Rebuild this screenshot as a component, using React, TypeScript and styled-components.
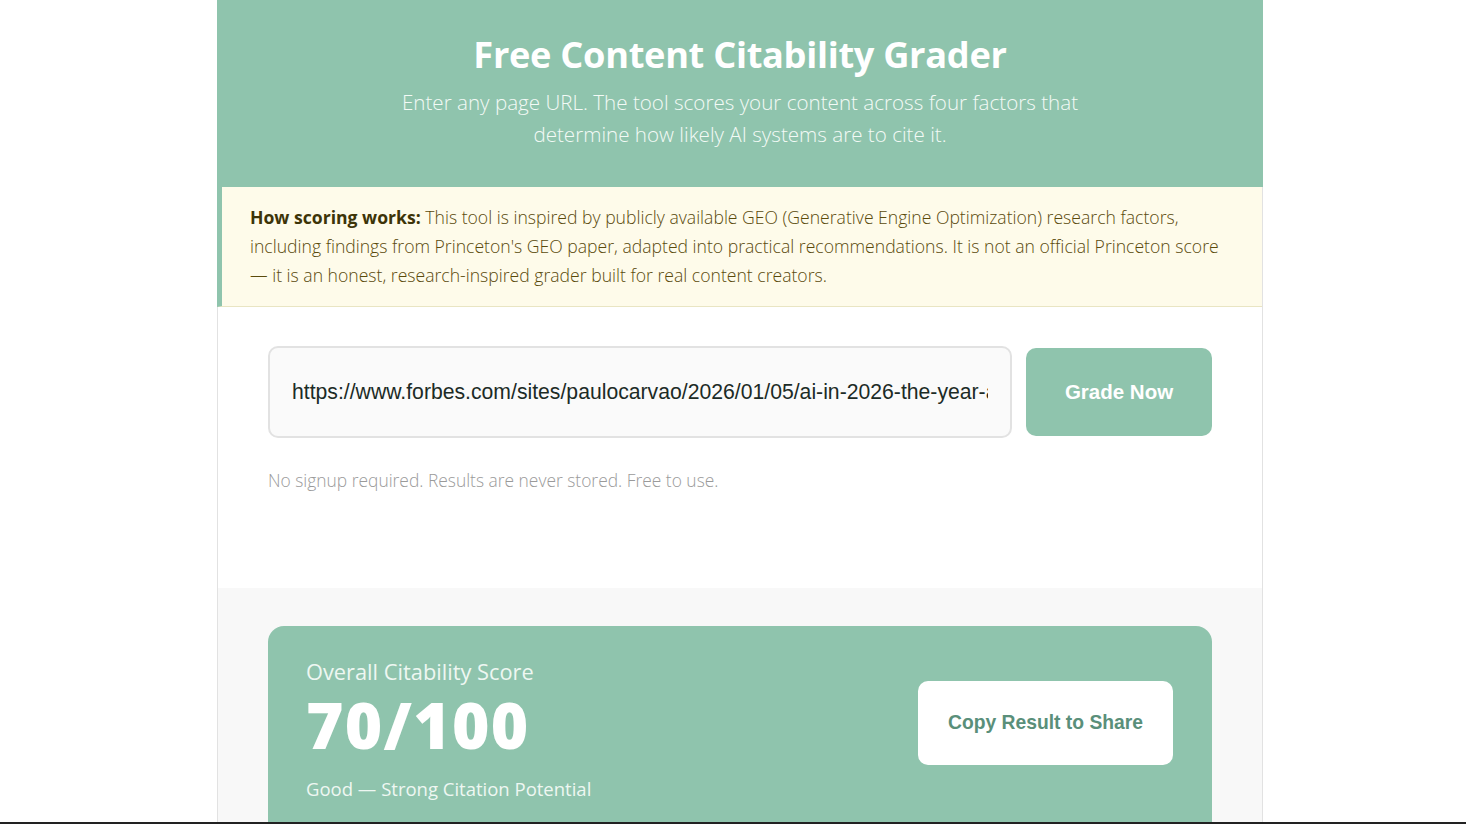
import styled, { createGlobalStyle } from "styled-components";

const GlobalStyle = createGlobalStyle`
  html, body {
    margin: 0;
    padding: 0;
    background: #ffffff;
  }
  body {
    font-family: "Open Sans", "Noto Sans", sans-serif;
  }
  * {
    box-sizing: border-box;
  }
`;

const green = "#8fc4ad";

const App = () => {
  const url =
    "https://www.forbes.com/sites/paulocarvao/2026/01/05/ai-in-2026-the-year-ai-gets-real/";

  return (
    <>
      <GlobalStyle />
      <Page>
        <Header>
          <Title>Free Content Citability Grader</Title>
          <Subtitle>
            Enter any page URL. The tool scores your content across four factors that
            determine how likely AI systems are to cite it.
          </Subtitle>
        </Header>
        <Notice>
          <strong>How scoring works:</strong> This tool is inspired by publicly available
          GEO (Generative Engine Optimization) research factors, including findings from
          Princeton's GEO paper, adapted into practical recommendations. It is not an
          official Princeton score — it is an honest, research-inspired grader built for
          real content creators.
        </Notice>
        <FormSection>
          <InputRow>
            <UrlInput defaultValue={url} readOnly />
            <GradeButton>Grade Now</GradeButton>
          </InputRow>
          <Hint>No signup required. Results are never stored. Free to use.</Hint>
        </FormSection>
        <Results>
          <ScoreCard>
            <ScoreInfo>
              <ScoreLabel>Overall Citability Score</ScoreLabel>
              <ScoreValue>70/100</ScoreValue>
              <ScoreVerdict>Good — Strong Citation Potential</ScoreVerdict>
            </ScoreInfo>
            <CopyButton>Copy Result to Share</CopyButton>
          </ScoreCard>
        </Results>
      </Page>
      <BottomEdge />
    </>
  );
};

export default App;

const Page = styled.div`
  width: 1046px;
  margin-left: 217px;
  border-left: 1px solid #e2e2e2;
  border-right: 1px solid #e2e2e2;
  min-height: 824px;
  display: flex;
  flex-direction: column;
`;

const Header = styled.header`
  background: ${green};
  margin: 0 -1px;
  padding: 30px 40px 37px;
  text-align: center;
  color: #ffffff;
`;

const Title = styled.h1`
  margin: 0 0 8px;
  font-size: 36.2px;
  font-weight: 700;
  line-height: 48px;
  letter-spacing: -0.3px;
`;

const Subtitle = styled.p`
  margin: 0 auto;
  max-width: 720px;
  font-size: 20.6px;
  font-weight: 300;
  line-height: 32px;
  color: #f3faf6;
`;

const Notice = styled.div`
  background: #fefbea;
  border-left: 5px solid ${green};
  border-bottom: 1px solid #e9e5c3;
  margin-left: -1px;
  padding: 16px 30px 16px 28px;
  font-size: 17.6px;
  font-weight: 300;
  line-height: 29px;
  color: #5a4a0c;

  strong {
    font-weight: 700;
    color: #3d3408;
  }
`;

const FormSection = styled.section`
  background: #ffffff;
  padding: 39px 50px 96px;
`;

const InputRow = styled.div`
  display: flex;
  align-items: center;
  gap: 14px;
`;

const UrlInput = styled.input`
  flex: 1;
  min-width: 0;
  height: 92px;
  padding: 0 22px;
  border: 2px solid #e2e2e2;
  border-radius: 10px;
  background: #fafafa;
  font-family: "Liberation Sans", Arial, sans-serif;
  font-size: 21.2px;
  color: #1c2b26;
  outline: none;
`;

const GradeButton = styled.button`
  width: 186px;
  height: 88px;
  border: none;
  border-radius: 10px;
  background: ${green};
  color: #ffffff;
  font-family: "Liberation Sans", Arial, sans-serif;
  font-size: 20.5px;
  font-weight: 700;
  cursor: pointer;
`;

const Hint = styled.p`
  margin: 30px 0 0;
  font-size: 17.4px;
  font-weight: 300;
  color: #9a9a9a;
`;

const Results = styled.section`
  flex: 1;
  background: #f8f8f8;
  padding: 38px 50px 0;
`;

const ScoreCard = styled.div`
  background: ${green};
  border-radius: 16px;
  padding: 31px 39px 40px 38px;
  display: flex;
  align-items: center;
  justify-content: space-between;
`;

const ScoreInfo = styled.div`
  display: flex;
  flex-direction: column;
`;

const ScoreLabel = styled.div`
  font-size: 21.8px;
  font-weight: 400;
  color: #eef7f2;
  line-height: 30px;
`;

const ScoreValue = styled.div`
  font-size: 64px;
  font-weight: 800;
  color: #ffffff;
  line-height: 76px;
  letter-spacing: 1.3px;
`;

const ScoreVerdict = styled.div`
  margin-top: 13px;
  font-size: 18.5px;
  color: #eef7f2;
  line-height: 26px;
`;

const CopyButton = styled.button`
  width: 255px;
  height: 84px;
  margin-top: -14px;
  border: none;
  border-radius: 10px;
  background: #ffffff;
  color: #5a8f7a;
  font-family: "Liberation Sans", Arial, sans-serif;
  font-size: 19.3px;
  font-weight: 700;
  cursor: pointer;
`;

const BottomEdge = styled.div`
  position: fixed;
  left: 0;
  right: 0;
  bottom: 0;
  height: 2px;
  background: #222222;
`;
